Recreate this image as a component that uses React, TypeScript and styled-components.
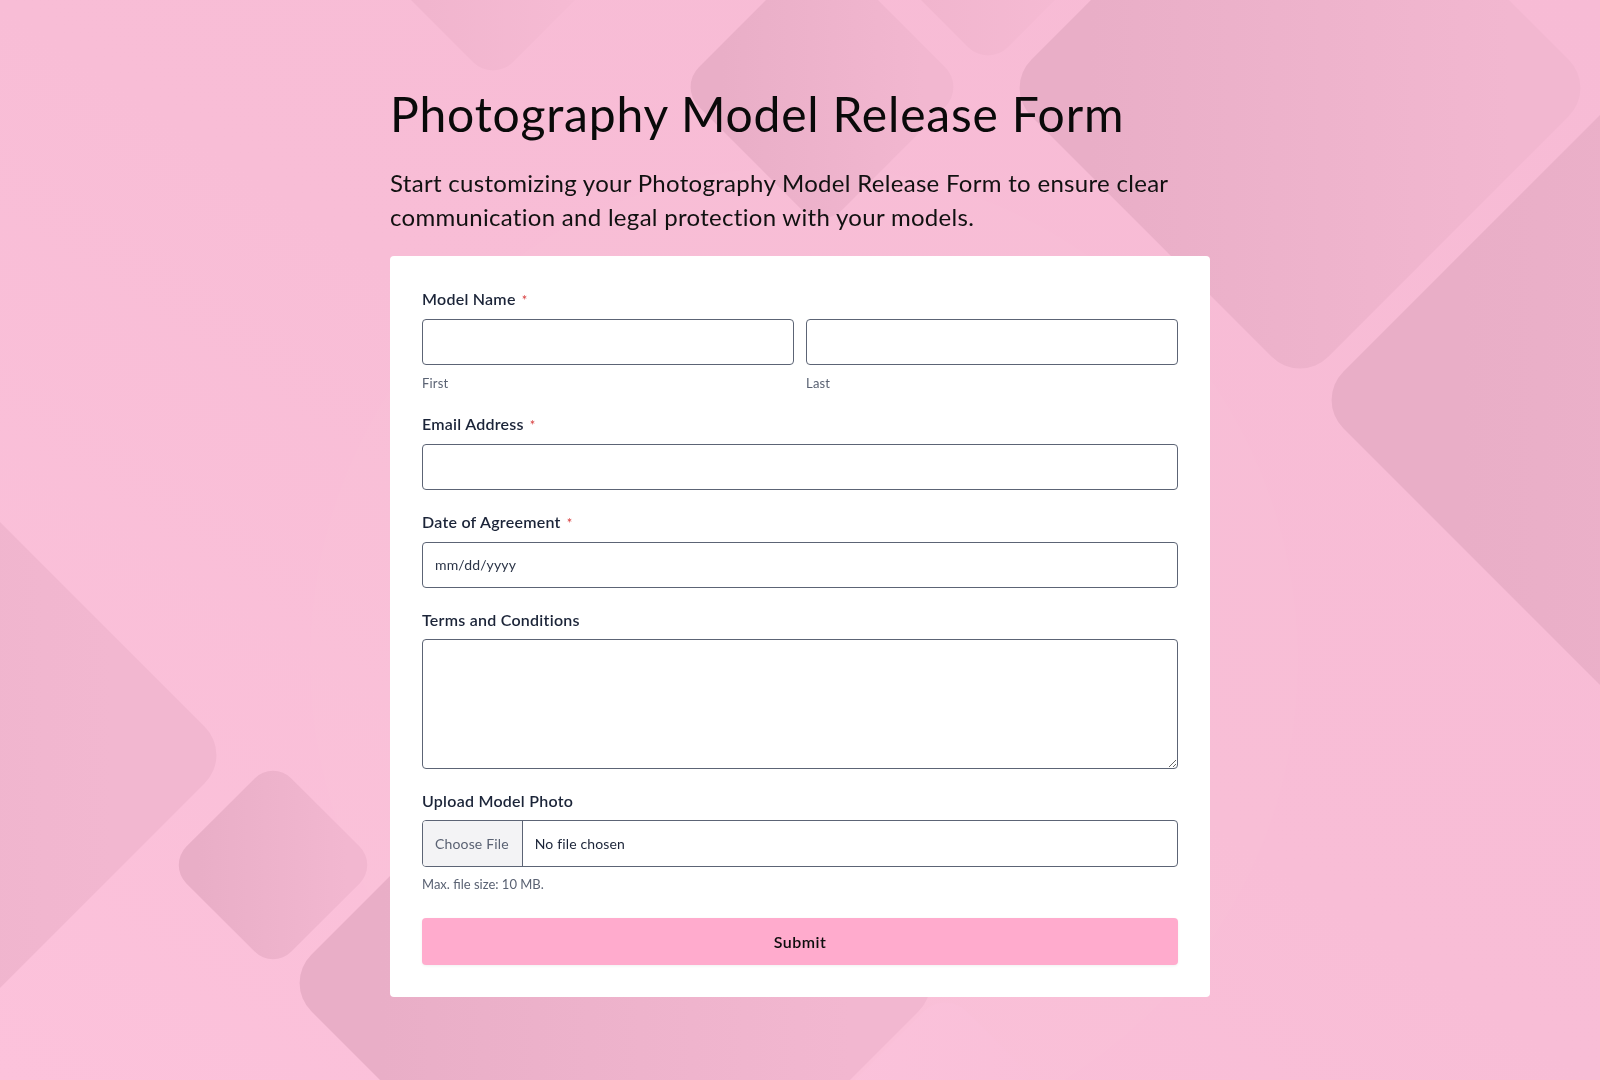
import React from "react";
import styled, { createGlobalStyle } from "styled-components";

const GlobalStyle = createGlobalStyle`
  html, body {
    margin: 0;
    padding: 0;
    background: #f8bdd6;
  }
  body {
    font-family: Lato, "Noto Sans", sans-serif;
    color: #0d0d0d;
  }
  * {
    box-sizing: border-box;
  }
`;

type Shape = { cx: number; cy: number; d: number; r: number; tone: string };

// diamonds in the backdrop: centre, half diagonal, corner radius
const shapes: Shape[] = [
  { cx: 493, cy: -58, d: 140, r: 28, tone: "soft" },
  { cx: 822, cy: 87, d: 143, r: 28, tone: "dark" },
  { cx: 988, cy: -73, d: 140, r: 28, tone: "soft" },
  { cx: 1300, cy: 88, d: 297, r: 40, tone: "dark" },
  { cx: 1815, cy: 400, d: 500, r: 40, tone: "dark" },
  { cx: -183, cy: 755, d: 416, r: 40, tone: "dark" },
  { cx: 273, cy: 865, d: 105, r: 26, tone: "dark" },
  { cx: 615, cy: 983, d: 332, r: 40, tone: "dark" },
  { cx: 945, cy: 1180, d: 190, r: 30, tone: "light" },
];

function Backdrop() {
  return (
    <BackdropSvg viewBox="0 0 1600 1080" preserveAspectRatio="xMidYMid slice">
      <defs>
        <linearGradient id="dark" x1="0" y1="0.5" x2="1" y2="0.5" gradientTransform="rotate(-45 0.5 0.5)">
          <stop offset="0" stopColor="#e9aec7" />
          <stop offset="1" stopColor="#f2b7d0" />
        </linearGradient>
        <linearGradient id="soft" x1="0" y1="0.5" x2="1" y2="0.5" gradientTransform="rotate(-45 0.5 0.5)">
          <stop offset="0" stopColor="#f0b4cd" />
          <stop offset="1" stopColor="#f6bbd4" />
        </linearGradient>
        <linearGradient id="light" x1="0" y1="0.5" x2="1" y2="0.5" gradientTransform="rotate(-45 0.5 0.5)">
          <stop offset="0" stopColor="#fbc2db" />
          <stop offset="1" stopColor="#f9bfd8" />
        </linearGradient>
        <linearGradient id="page" x1="0" y1="1" x2="1" y2="0">
          <stop offset="0" stopColor="#fcc2db" />
          <stop offset="0.5" stopColor="#f8bdd6" />
          <stop offset="1" stopColor="#f7bbd5" />
        </linearGradient>
      </defs>
      <rect x="0" y="0" width="1600" height="1080" fill="url(#page)" />
      <circle cx="804" cy="660" r="494" fill="#ffffff" opacity="0.025" />
      {shapes.map((s, i) => {
        const side = s.d * Math.SQRT2;
        return (
          <rect
            key={i}
            x={s.cx - side / 2}
            y={s.cy - side / 2}
            width={side}
            height={side}
            rx={s.r}
            fill={`url(#${s.tone})`}
            transform={`rotate(45 ${s.cx} ${s.cy})`}
          />
        );
      })}
    </BackdropSvg>
  );
}

function FieldLabel({ text, required }: { text: string; required?: boolean }) {
  return (
    <Label>
      {text}
      {required && <Star>*</Star>}
    </Label>
  );
}

export default function App() {
  return (
    <>
      <GlobalStyle />
      <Backdrop />
      <Page>
        <Header>
          <Title>Photography Model Release Form</Title>
          <Intro>
            Start customizing your Photography Model Release Form to ensure clear communication and
            legal protection with your models.
          </Intro>
        </Header>

        <Card>
          <Field>
            <FieldLabel text="Model Name" required />
            <NameRow>
              <NamePart>
                <Input type="text" />
                <SubLabel>First</SubLabel>
              </NamePart>
              <NamePart>
                <Input type="text" />
                <SubLabel>Last</SubLabel>
              </NamePart>
            </NameRow>
          </Field>

          <Field>
            <FieldLabel text="Email Address" required />
            <Input type="email" />
          </Field>

          <Field>
            <FieldLabel text="Date of Agreement" required />
            <Input type="text" placeholder="mm/dd/yyyy" />
          </Field>

          <Field>
            <FieldLabel text="Terms and Conditions" />
            <TextArea />
          </Field>

          <Field>
            <FieldLabel text="Upload Model Photo" />
            <FileBox>
              <HiddenFile type="file" />
              <FileButton>Choose File</FileButton>
              <FileName>No file chosen</FileName>
            </FileBox>
            <Hint>Max. file size: 10 MB.</Hint>
          </Field>

          <SubmitButton type="button">Submit</SubmitButton>
        </Card>
      </Page>
    </>
  );
}

const BackdropSvg = styled.svg`
  position: fixed;
  inset: 0;
  width: 100%;
  height: 100%;
  z-index: 0;
`;

const Page = styled.main`
  position: relative;
  z-index: 1;
  width: 820px;
  margin: 0 auto;
  padding: 85px 0 60px;
`;

const Header = styled.header`
  display: flex;
  flex-direction: column;
  gap: 23px;
  margin-bottom: 22px;
`;

const Title = styled.h1`
  margin: 0;
  font-family: Lato, sans-serif;
  font-weight: 400;
  font-size: 48px;
  line-height: 1.2;
  letter-spacing: 0.8px;
  color: #0a0a0a;
`;

const Intro = styled.p`
  margin: 0;
  font-family: Lato, sans-serif;
  font-size: 24px;
  line-height: 34px;
  letter-spacing: 0.3px;
  color: #111111;
`;

const Card = styled.section`
  display: flex;
  flex-direction: column;
  gap: 21px;
  background: #ffffff;
  border-radius: 4px;
  padding: 32px;
`;

const Field = styled.div`
  display: flex;
  flex-direction: column;
`;

const Label = styled.label`
  display: flex;
  align-items: baseline;
  font-size: 16px;
  line-height: 22px;
  font-weight: 600;
  letter-spacing: 0.25px;
  color: #1b2438;
  margin-bottom: 8px;
`;

const Star = styled.span`
  color: #d63a3a;
  font-size: 13px;
  font-weight: 400;
  margin-left: 6px;
`;

const NameRow = styled.div`
  display: grid;
  grid-template-columns: 1fr 1fr;
  gap: 12px;
`;

const NamePart = styled.div`
  display: flex;
  flex-direction: column;
`;

const Input = styled.input`
  width: 100%;
  height: 46px;
  border: 1px solid #5c6475;
  border-radius: 4px;
  padding: 0 12px;
  font-family: Lato, sans-serif;
  font-size: 14px;
  letter-spacing: 0.15px;
  color: #1b2438;
  background: #ffffff;
  outline: none;

  &::placeholder {
    color: #2b3447;
  }
`;

const SubLabel = styled.span`
  margin-top: 9px;
  font-size: 13px;
  line-height: 18px;
  letter-spacing: 0.2px;
  color: #5a6273;
`;

const TextArea = styled.textarea`
  width: 100%;
  height: 130px;
  border: 1px solid #5c6475;
  border-radius: 4px;
  padding: 10px 12px;
  font-family: Lato, sans-serif;
  font-size: 14px;
  resize: vertical;
  outline: none;
`;

const FileBox = styled.label`
  position: relative;
  display: flex;
  align-items: stretch;
  height: 47px;
  border: 1px solid #5c6475;
  border-radius: 4px;
  overflow: hidden;
  cursor: pointer;
`;

const HiddenFile = styled.input`
  position: absolute;
  width: 1px;
  height: 1px;
  opacity: 0;
`;

const FileButton = styled.span`
  display: flex;
  align-items: center;
  padding: 0 13px 0 12px;
  background: #f3f3f5;
  border-right: 1px solid #5c6475;
  font-size: 14px;
  letter-spacing: 0.15px;
  color: #5a6273;
`;

const FileName = styled.span`
  display: flex;
  align-items: center;
  padding: 0 12px;
  font-size: 14px;
  letter-spacing: 0.15px;
  color: #1b2438;
`;

const Hint = styled.span`
  margin-top: 9px;
  font-size: 13px;
  line-height: 16px;
  color: #5a6273;
`;

const SubmitButton = styled.button`
  margin-top: 5px;
  height: 47px;
  border: none;
  border-radius: 4px;
  background: #ffabcd;
  box-shadow: 0 1px 3px rgba(0, 0, 0, 0.06);
  font-family: Lato, sans-serif;
  font-size: 16px;
  font-weight: 600;
  letter-spacing: 0.5px;
  color: #0d0d0d;
  cursor: pointer;
`;
